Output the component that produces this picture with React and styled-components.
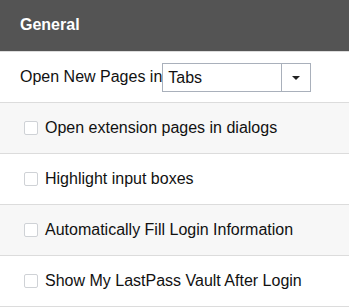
import styled, { createGlobalStyle } from 'styled-components'

const GlobalStyle = createGlobalStyle`
  body {
    margin: 0;
    background: #fff;
    font-family: "Liberation Sans", Arial, Helvetica, sans-serif;
  }
`

const Panel = styled.div`
  width: 349px;
  color: #111;
`

const Header = styled.div`
  height: 51px;
  display: flex;
  align-items: center;
  padding: 0 20px 1px;
  background: #545454;
  color: #fff;
  font-size: 16px;
  font-weight: bold;
  box-sizing: border-box;
`

const Row = styled.div`
  display: flex;
  align-items: center;
  height: 50px;
  padding: 0 0 0 ${props => (props.$check ? '24px' : '20px')};
  border-top: 1px solid #dcdcdc;
  background: ${props => (props.$shade ? '#f7f7f7' : '#fff')};
  font-size: 16px;
  &:last-child {
    border-bottom: 1px solid #dcdcdc;
  }
`

const SelectBox = styled.div`
  display: flex;
  align-items: stretch;
  width: 149px;
  height: 29px;
  margin-top: 1px;
  box-sizing: border-box;
  border: 1px solid #a9b0bb;
  background: #fff;
`

const SelectValue = styled.span`
  flex: 1;
  display: flex;
  align-items: center;
  padding-left: 5px;
`

const SelectArrow = styled.span`
  width: 28px;
  display: flex;
  align-items: center;
  justify-content: center;
  border-left: 1px solid #a9b0bb;
  &::after {
    content: '';
    border-left: 4px solid transparent;
    border-right: 4px solid transparent;
    border-top: 4px solid #222;
  }
`

const Box = styled.input.attrs({ type: 'checkbox' })`
  appearance: none;
  width: 14px;
  height: 14px;
  margin: 0 7px 0 0;
  box-sizing: border-box;
  border: 1px solid #cfd2d6;
  border-radius: 2px;
  background: #fff;
`

const CheckLabel = styled.label`
  display: flex;
  align-items: center;
`

const options = [
  'Open extension pages in dialogs',
  'Highlight input boxes',
  'Automatically Fill Login Information',
  'Show My LastPass Vault After Login'
]

export default function App () {
  return (
    <Panel>
      <GlobalStyle />
      <Header>General</Header>
      <Row>
        <span>Open New Pages in</span>
        <SelectBox>
          <SelectValue>Tabs</SelectValue>
          <SelectArrow />
        </SelectBox>
      </Row>
      {options.map((text, i) => (
        <Row key={text} $check $shade={i % 2 === 0}>
          <CheckLabel>
            <Box />
            {text}
          </CheckLabel>
        </Row>
      ))}
    </Panel>
  )
}
